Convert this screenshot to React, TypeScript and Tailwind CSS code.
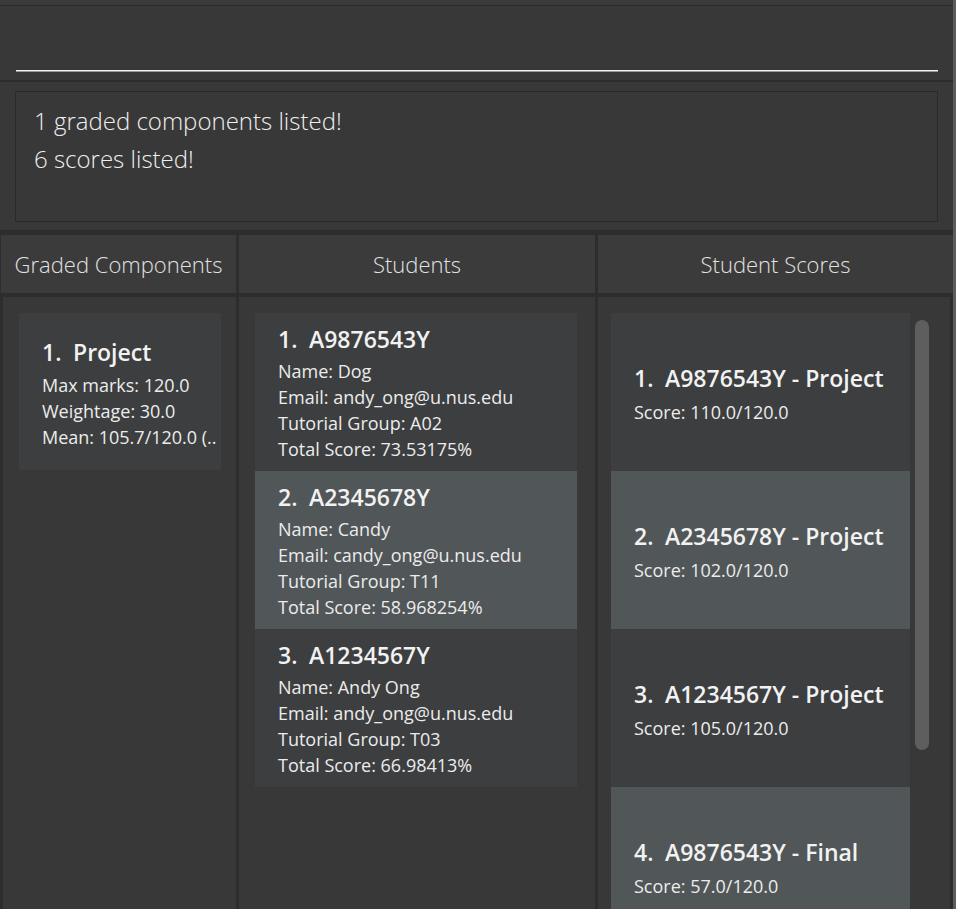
import React from "react";

const font = { fontFamily: '"Open Sans", "Noto Sans", sans-serif' };

type Student = {
  id: string;
  name: string;
  email: string;
  group: string;
  total: string;
};

const students: Student[] = [
  { id: "A9876543Y", name: "Dog", email: "andy_ong@u.nus.edu", group: "A02", total: "73.53175%" },
  { id: "A2345678Y", name: "Candy", email: "candy_ong@u.nus.edu", group: "T11", total: "58.968254%" },
  { id: "A1234567Y", name: "Andy Ong", email: "andy_ong@u.nus.edu", group: "T03", total: "66.98413%" },
];

// only the rows that fit in the window are shown
const scores = [
  { id: "A9876543Y", comp: "Project", score: "110.0/120.0" },
  { id: "A2345678Y", comp: "Project", score: "102.0/120.0" },
  { id: "A1234567Y", comp: "Project", score: "105.0/120.0" },
  { id: "A9876543Y", comp: "Final", score: "57.0/120.0" },
];

function Header({ title }: { title: string }) {
  return (
    <div className="h-[58px] shrink-0 bg-[#3b3b3b] flex items-center justify-center text-[22px] font-light text-[#e2e2e2] pt-[1px]">
      {title}
    </div>
  );
}

function Title({ index, text }: { index: number; text: string }) {
  return (
    <div className="flex items-baseline text-[23px] font-semibold text-[#f2f2f2] leading-[30px] whitespace-nowrap">
      <span className="w-[31px]">{index}.</span>
      <span>{text}</span>
    </div>
  );
}

export default function App() {
  return (
    <div style={font} className="w-[956px] h-[909px] overflow-hidden flex bg-[#2d2d2d]">
      <div className="w-[953px] flex flex-col">
        {/* top strip */}
        <div className="h-[5px] bg-[#3a3a3a]" />
        <div className="h-[1px] bg-[#2c2c2c]" />

        {/* command box */}
        <div className="h-[74px] bg-[#383838] px-[16px] flex flex-col justify-end pb-[8px]">
          <div className="h-[2px] w-[922px] bg-[#f0f0f0] border-b border-[#9a9a9a]" />
        </div>
        <div className="h-[2px] bg-[#2c2c2c]" />

        {/* result display */}
        <div className="h-[148px] bg-[#383838] pt-[9px] pb-[8px] px-[15px]">
          <div className="h-full w-[923px] border border-[#2a2a2a] bg-[#383838] pl-[18px] pt-[10px] text-[24px] font-light text-[#efefef] leading-[38px]">
            <div>1 graded components listed!</div>
            <div>6 scores listed!</div>
          </div>
        </div>

        {/* panels */}
        <div className="flex-1 min-h-0 flex pt-[5px] pl-[1px] gap-[3px] bg-[#2d2d2d]">
          {/* graded components */}
          <div className="w-[235px] flex flex-col gap-[4px]">
            <Header title="Graded Components" />
            <div className="flex-1 bg-[#383838] ml-[2px] pl-[16px] pt-[16px]">
              <div className="w-[202px] h-[157px] bg-[#3c3e3f] pl-[23px] pt-[24px] text-[#ececec]">
                <Title index={1} text="Project" />
                <div className="text-[18px] leading-[26px] mt-[5px]">
                  <div>Max marks: 120.0</div>
                  <div>Weightage: 30.0</div>
                  <div className="whitespace-nowrap overflow-hidden">Mean: 105.7/120.0 (..</div>
                </div>
              </div>
            </div>
          </div>

          {/* students */}
          <div className="w-[356px] flex flex-col gap-[4px]">
            <Header title="Students" />
            <div className="flex-1 bg-[#383838] pl-[16px] pt-[16px]">
              {students.map((s, i) => (
                <div
                  key={s.id}
                  className={`w-[322px] h-[158px] pl-[23px] pt-[11px] text-[#ececec] ${
                    i % 2 === 0 ? "bg-[#3c3e3f]" : "bg-[#515658]"
                  }`}
                >
                  <Title index={i + 1} text={s.id} />
                  <div className="text-[18px] leading-[26px] mt-[4px]">
                    <div>Name: {s.name}</div>
                    <div>Email: {s.email}</div>
                    <div>Tutorial Group: {s.group}</div>
                    <div>Total Score: {s.total}</div>
                  </div>
                </div>
              ))}
            </div>
          </div>

          {/* student scores */}
          <div className="w-[355px] flex flex-col gap-[4px]">
            <Header title="Student Scores" />
            <div className="flex-1 min-h-0 bg-[#383838] pl-[13px] pt-[16px] mr-[3px] flex gap-[5px] overflow-hidden">
              <div className="w-[299px] shrink-0">
                {scores.map((s, i) => (
                  <div
                    key={i}
                    className={`h-[158px] pl-[23px] pt-[3px] flex flex-col justify-center text-[#ececec] ${
                      i % 2 === 0 ? "bg-[#3c3e3f]" : "bg-[#515658]"
                    }`}
                  >
                    <Title index={i + 1} text={`${s.id} - ${s.comp}`} />
                    <div className="text-[18px] leading-[26px] mt-[6px]">Score: {s.score}</div>
                  </div>
                ))}
              </div>
              <div className="pt-[7px]">
                <div className="w-[14px] h-[430px] rounded-full bg-[#5e5e5e]" />
              </div>
            </div>
          </div>
        </div>
      </div>
      <div className="w-[3px] bg-[#5c5c5c]" />
    </div>
  );
}
